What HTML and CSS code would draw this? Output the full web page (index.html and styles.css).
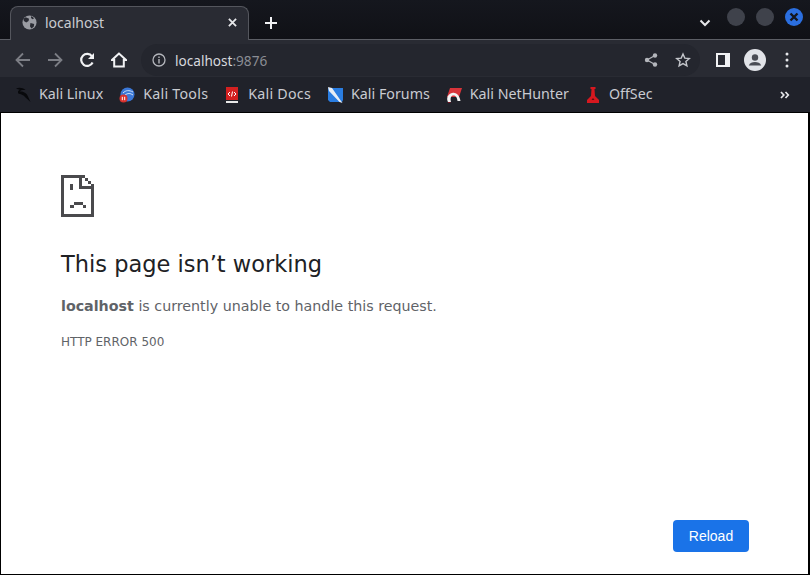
FILE: index.html
```html
<!DOCTYPE html>
<html lang="en">
<head>
<meta charset="utf-8">
<title>localhost</title>
<link rel="stylesheet" href="styles.css">
</head>
<body>
<div class="window">
  <header class="tabstrip">
    <div class="tab">
      <svg class="tab-icon" viewBox="0 0 16 16"><circle cx="8" cy="8" r="7.5" fill="#9a9ca3"/><path d="M4 2.500 7.500 4 7 6.500 4.500 8 2 6.500 1.500 4ZM9 8.500l4 1-.5 3-2.500 2-1.500-2.500ZM10 1l3 2.500-2 1-1.500-1.500Z" fill="#292b33"/></svg>
      <span class="tab-title">localhost</span>
      <svg class="tab-close" viewBox="0 0 10 10"><path d="M1 1l8 8M9 1 1 9" stroke="#e6e7ea" stroke-width="2"/></svg>
    </div>
    <svg class="newtab" viewBox="0 0 12 12"><path d="M6 0v12M0 6h12" stroke="#f1f2f4" stroke-width="2"/></svg>
    <div class="strip-space"></div>
    <svg class="chevron" viewBox="0 0 12 8"><path d="M1.500 1.500 6 6l4.500-4.500" fill="none" stroke="#e6e7ea" stroke-width="2"/></svg>
    <span class="wbtn"></span>
    <span class="wbtn"></span>
    <span class="wbtn wbtn-close"><svg viewBox="0 0 10 10"><path d="M1.500 1.500l7 7M8.500 1.500l-7 7" stroke="#14161d" stroke-width="2.400"/></svg></span>
  </header>

  <nav class="toolbar">
    <button class="tool"><svg viewBox="0 0 16 16"><path d="M15 8H2M8 1.500 1.500 8 8 14.500" fill="none" stroke="#7c7e85" stroke-width="1.800"/></svg></button>
    <button class="tool"><svg viewBox="0 0 16 16"><path d="M1 8h13M8 1.500 14.500 8 8 14.500" fill="none" stroke="#7c7e85" stroke-width="1.800"/></svg></button>
    <button class="tool"><svg viewBox="0 0 16 16"><path d="M13.600 10.500A6 6 0 1 1 13 4.300" fill="none" stroke="#f1f2f4" stroke-width="2.200"/><path d="M15 1v6H9Z" fill="#f1f2f4"/></svg></button>
    <button class="tool"><svg viewBox="0 0 16 16"><path d="M8 1.500 1 8h2.200v6.500h9.600V8H15Z" fill="none" stroke="#f1f2f4" stroke-width="2"/></svg></button>
    <div class="omnibox">
      <svg class="info" viewBox="0 0 14 14"><circle cx="7" cy="7" r="6" fill="none" stroke="#b4b6bc" stroke-width="1.300"/><path d="M7 6v4.500M7 3.500v1.500" stroke="#b4b6bc" stroke-width="1.400"/></svg>
      <span class="url">localhost<span class="port">:9876</span></span>
      <div class="omni-space"></div>
      <svg class="omni-icon" viewBox="0 0 14 14"><path d="M11 2.500 3 7l8 4.500" fill="none" stroke="#b4b6bc" stroke-width="1.300"/><circle cx="11" cy="2.500" r="2.200" fill="#b4b6bc"/><circle cx="3" cy="7" r="2.200" fill="#b4b6bc"/><circle cx="11" cy="11.500" r="2.200" fill="#b4b6bc"/></svg>
      <svg class="omni-star" viewBox="0 0 16 16"><path d="M8 2l1.800 4.100 4.500.4-3.400 3 1 4.400L8 11.600l-3.900 2.300 1-4.400-3.400-3 4.500-.4Z" fill="none" stroke="#c4c6cb" stroke-width="1.400"/></svg>
    </div>
    <svg class="panel" viewBox="0 0 14 14"><rect width="14" height="14" fill="#f1f2f4"/><rect x="2" y="2" width="7" height="10" fill="#292b33"/></svg>
    <svg class="avatar" viewBox="0 0 22 22"><circle cx="11" cy="11" r="11" fill="#e1e3e8"/><circle cx="11" cy="8.500" r="3.200" fill="#4a4c54"/><path d="M4.800 16.500c1-2.600 3.500-3.500 6.200-3.500s5.200.9 6.200 3.500Z" fill="#4a4c54"/></svg>
    <svg class="kebab" viewBox="0 0 4 16"><circle cx="2" cy="2" r="1.500" fill="#e6e7ea"/><circle cx="2" cy="8" r="1.500" fill="#e6e7ea"/><circle cx="2" cy="14" r="1.500" fill="#e6e7ea"/></svg>
  </nav>

  <nav class="bookmarks">
    <a class="bm"><svg viewBox="0 0 16 16"><path d="M1 1.500C4 0 8 .5 10.500 3 8 2.800 5.500 3 5 4.500 8.500 4 12 6.500 13 9.500l2.500 5.500-5-4.500C8.500 8 5.500 6.800 3.500 6.800 2.500 5 3 3.500 4.800 2.800 3.500 2.300 2.300 2 1 1.500Z" fill="#08090c"/></svg><span>Kali Linux</span></a>
    <a class="bm bm-wide"><svg viewBox="0 0 16 16"><circle cx="8.500" cy="7.500" r="7" fill="#3b78d8"/><path d="M4 6c3-3 6-3 10-1M6 8c3-2 5-2 8 0" fill="none" stroke="#cfe0f7" stroke-width="1"/><circle cx="4.500" cy="11.500" r="4" fill="#d9322e"/><path d="M3.300 9.800v3.400M5.700 9.800v3.400" stroke="#fff" stroke-width="1"/></svg><span>Kali Tools</span></a>
    <a class="bm bm-wide"><svg viewBox="0 0 16 16"><path d="M2 0h12v13H2Z" fill="#d32020"/><path d="M2 14h12v2H2Z" fill="#e8e8e8"/><path d="M6 5 4 7l2 2M10 5l2 2-2 2" fill="none" stroke="#fff" stroke-width="1"/><path d="M8.500 4.500 7.500 9.500" stroke="#fff" stroke-width="1"/></svg><span>Kali Docs</span></a>
    <a class="bm"><svg viewBox="0 0 16 16"><path d="M1 1h15v12l-1 2H3L1 13Z" fill="#2a7de1"/><path d="M1 0l4 1 9 13 1.500 2-3-1L2 4Z" fill="#e8eef5"/></svg><span>Kali Forums</span></a>
    <a class="bm"><svg viewBox="0 0 16 16"><path d="M4 1h12l-3 9H1Z" fill="#d8343a"/><path d="M1.500 14c-1.500-5 3-9 7-8 3 .6 5 3 6 8h-3C11 10 9.500 8.500 7.500 8.500 5 8.500 4 11 5 15H2Z" fill="#f3f3f3"/><path d="M2 15h3l-1 1H2Z" fill="#7a1020"/></svg><span>Kali NetHunter</span></a>
    <a class="bm"><svg viewBox="0 0 16 16"><path d="M5.500 0h5v2h-1l.5 7 4 4v3H2v-3l4-4 .5-7h-1Z" fill="#d6181f"/><path d="M6.500 13h3l-1.500-2Z" fill="#5a0b10"/></svg><span>OffSec</span></a>
    <div class="bm-space"></div>
    <svg class="more" viewBox="0 0 10 8"><path d="M1 1l2.800 3L1 7M5.500 1l2.800 3-2.800 3" fill="none" stroke="#e6e7ea" stroke-width="1.700"/></svg>
  </nav>

  <main class="page">
    <svg class="sad" viewBox="0 0 33 42" shape-rendering="crispEdges">
      <path fill="#4a4a4d" d="M0 0h21v3H3v36h27V14h3v28H0ZM18 0h3v11h12v3H18ZM21 0h3v3h-3ZM24 3h3v3h-3ZM27 6h3v3h-3ZM30 9h3v3h-3ZM9 9h3v6H9ZM13 27h9v3h-9ZM9 30h4v3H9ZM22 30h3v3h-3Z"/>
    </svg>
    <h1 class="title">This page isn’t working</h1>
    <p class="desc"><strong>localhost</strong> is currently unable to handle this request.</p>
    <p class="code">HTTP ERROR 500</p>
    <div class="actions"><button class="reload">Reload</button></div>
  </main>
</div>
</body>
</html>
```
FILE: styles.css
```css
* { box-sizing: border-box; }
html, body { margin: 0; height: 100%; }
body { width: 810px; height: 575px; overflow: hidden; background: #000; }
svg { display: block; flex: none; }

.window { display: flex; flex-direction: column; height: 575px; font-family: "Noto Sans", sans-serif; }

.tabstrip {
  height: 40px; display: flex; align-items: flex-end; padding-left: 10px;
  background: linear-gradient(#15171e, #101116);
  border-bottom: 1px solid #5c5e65;
}
.tab {
  width: 239px; height: 34px; margin-bottom: -1px; padding: 0 11px 2px 11px;
  display: flex; align-items: center; gap: 8px;
  background: #292b33; border: 1px solid #54565d; border-bottom: 0;
  border-radius: 8px 8px 0 0;
  color: #c9cbd1; font-size: 14px;
}
.tab-icon { width: 15px; height: 15px; }
.tab-title { flex: 1; }
.tab-close { width: 9px; height: 9px; }
.newtab { width: 12px; height: 12px; margin: 0 0 10px 16px; }
.strip-space { flex: 1; }
.chevron { width: 12px; height: 8px; margin-bottom: 12px; }
.wbtn { width: 18px; height: 18px; margin: 0 0 13px 16px; border-radius: 50%; background: #3f424b; display: flex; align-items: center; justify-content: center; }
.wbtn + .wbtn { margin-left: 11px; }
.wbtn-close { background: #2b6fe0; margin-right: 7px; }
.wbtn-close svg { width: 10px; height: 10px; }

.toolbar {
  height: 37px; padding: 3px 0 0 15px; display: flex; align-items: center;
  background: #292b33;
}
.tool { width: 16px; height: 16px; padding: 0; margin-right: 16px; border: 0; background: none; }
.tool svg { width: 16px; height: 16px; }
.omnibox {
  width: 559px; height: 32px; margin-left: -2px; padding: 0 9px 0 11px;
  display: flex; align-items: center;
  background: #24262e; border-radius: 16px;
  color: #d6d8dd; font-size: 13.6px;
}
.info { width: 14px; height: 14px; margin-right: 9px; }
.port { color: #8b8d94; }
.omni-space { flex: 1; }
.omni-icon { width: 14px; height: 14px; }
.omni-star { width: 16px; height: 16px; margin-left: 17px; }
.panel { width: 14px; height: 14px; margin-left: 16px; }
.avatar { width: 22px; height: 22px; margin-left: 14px; }
.kebab { width: 4px; height: 16px; margin-left: 19px; }

.bookmarks {
  height: 36px; display: flex; align-items: center; padding: 0 20px 0 15px; gap: 16px;
  background: #20222a; border-bottom: 1px solid #000;
  color: #c9cbd1; font-size: 14.25px;
}
.bm { display: flex; align-items: center; gap: 8px; }
.bm svg { width: 16px; height: 16px; }
.bm span { padding-bottom: 2px; }
.bm-wide span { letter-spacing: .25px; }
.bm-space { flex: 1; }
.more { width: 10px; height: 8px; }

.page {
  flex: 1; display: flex; flex-direction: column; padding: 62px 59px 22px 60px;
  background: #fff; border: solid #000; border-width: 0 2px 1px 1px;
  font-family: "DejaVu Sans", sans-serif; color: #5f6368;
}
.sad { width: 33px; height: 42px; }
.title { margin: 32px 0 0; font-size: 22.5px; line-height: 30px; font-weight: 400; color: #202124; }
.desc { margin: 17px 0 0; font-size: 14.26px; line-height: 20px; }
.code { margin: 18px 0 0; font-size: 12px; line-height: 16px; }
.actions { margin-top: auto; display: flex; justify-content: flex-end; }
.reload {
  width: 76px; height: 32px; padding: 0; border: 0; border-radius: 4px;
  background: #1a73e8; color: #fff; font: 14px "Liberation Sans", sans-serif;
}
```
